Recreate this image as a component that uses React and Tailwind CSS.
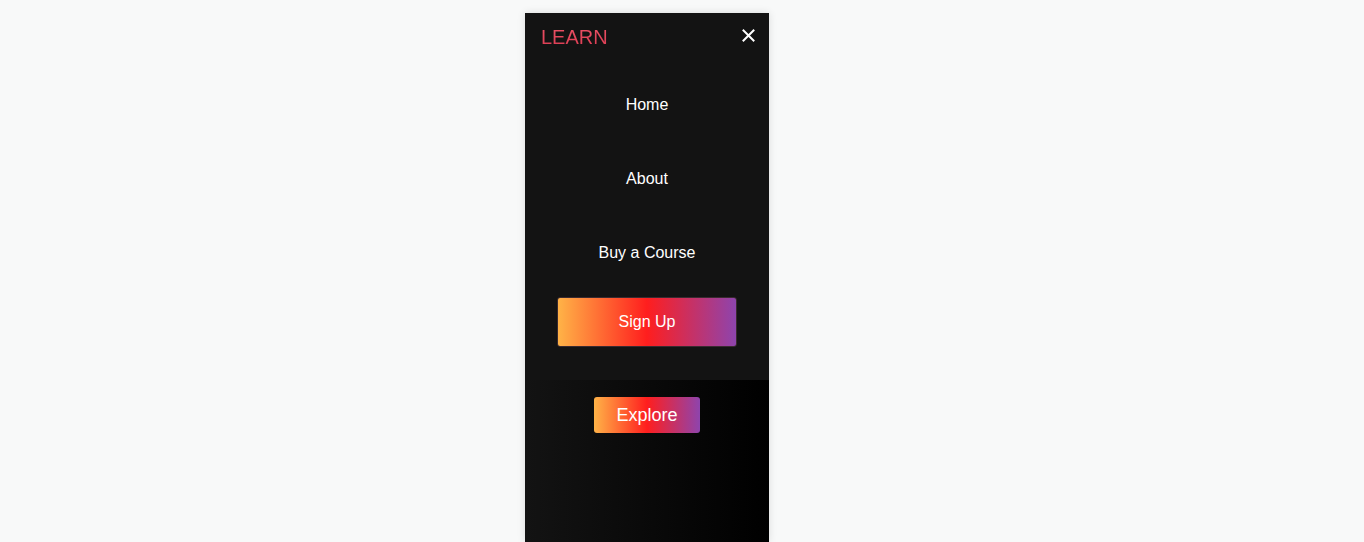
const links = ['Home', 'About', 'Buy a Course'];

function CloseIcon() {
  return (
    <svg width="13" height="13" viewBox="0 0 13 13" fill="none" stroke="white" strokeWidth="2" strokeLinecap="square">
      <path d="M1.5 1.5l10 10M11.5 1.5l-10 10" />
    </svg>
  );
}

export default function App() {
  return (
    <div className="min-h-[542px] bg-[#f8f9f9] pt-[13px] font-['Liberation_Sans',Arial,sans-serif]">
      <div className="ml-[525px] w-[244px] h-[529px] flex flex-col shadow-[0_0_8px_rgba(0,0,0,0.12)]">
        {/* Menu */}
        <div className="bg-[#131313] pb-[33px]">
          <div className="flex items-start justify-between pl-4 pr-[14px] pt-[10px] h-[55px]">
            <span className="text-[20px] leading-[28px] bg-gradient-to-b from-[#f0566a] to-[#d8384f] bg-clip-text text-transparent">
              LEARN
            </span>
            <button className="mt-[6px]" aria-label="Close">
              <CloseIcon />
            </button>
          </div>
          <ul className="flex flex-col items-center">
            {links.map(l => (
              <li key={l} className="py-[25px] text-[16px] leading-[24px] text-white">
                {l}
              </li>
            ))}
          </ul>
          <div className="flex justify-center mt-[7px]">
            <button className="w-[180px] h-[50px] rounded-[3px] border border-[#3a2a30] bg-[linear-gradient(to_right,#ffb347,#ff1e1e,#8e44ad)] text-white text-[16px]">
              Sign Up
            </button>
          </div>
        </div>
        {/* Hero */}
        <div className="flex-1 bg-[linear-gradient(to_right,#131313,#000000)] flex justify-center items-start pt-[17px]">
          <button className="w-[106px] h-[36px] rounded-[3px] bg-[linear-gradient(to_right,#ffb347,#ff1e1e,#8e44ad)] text-white text-[18px]">
            Explore
          </button>
        </div>
      </div>
    </div>
  );
}
